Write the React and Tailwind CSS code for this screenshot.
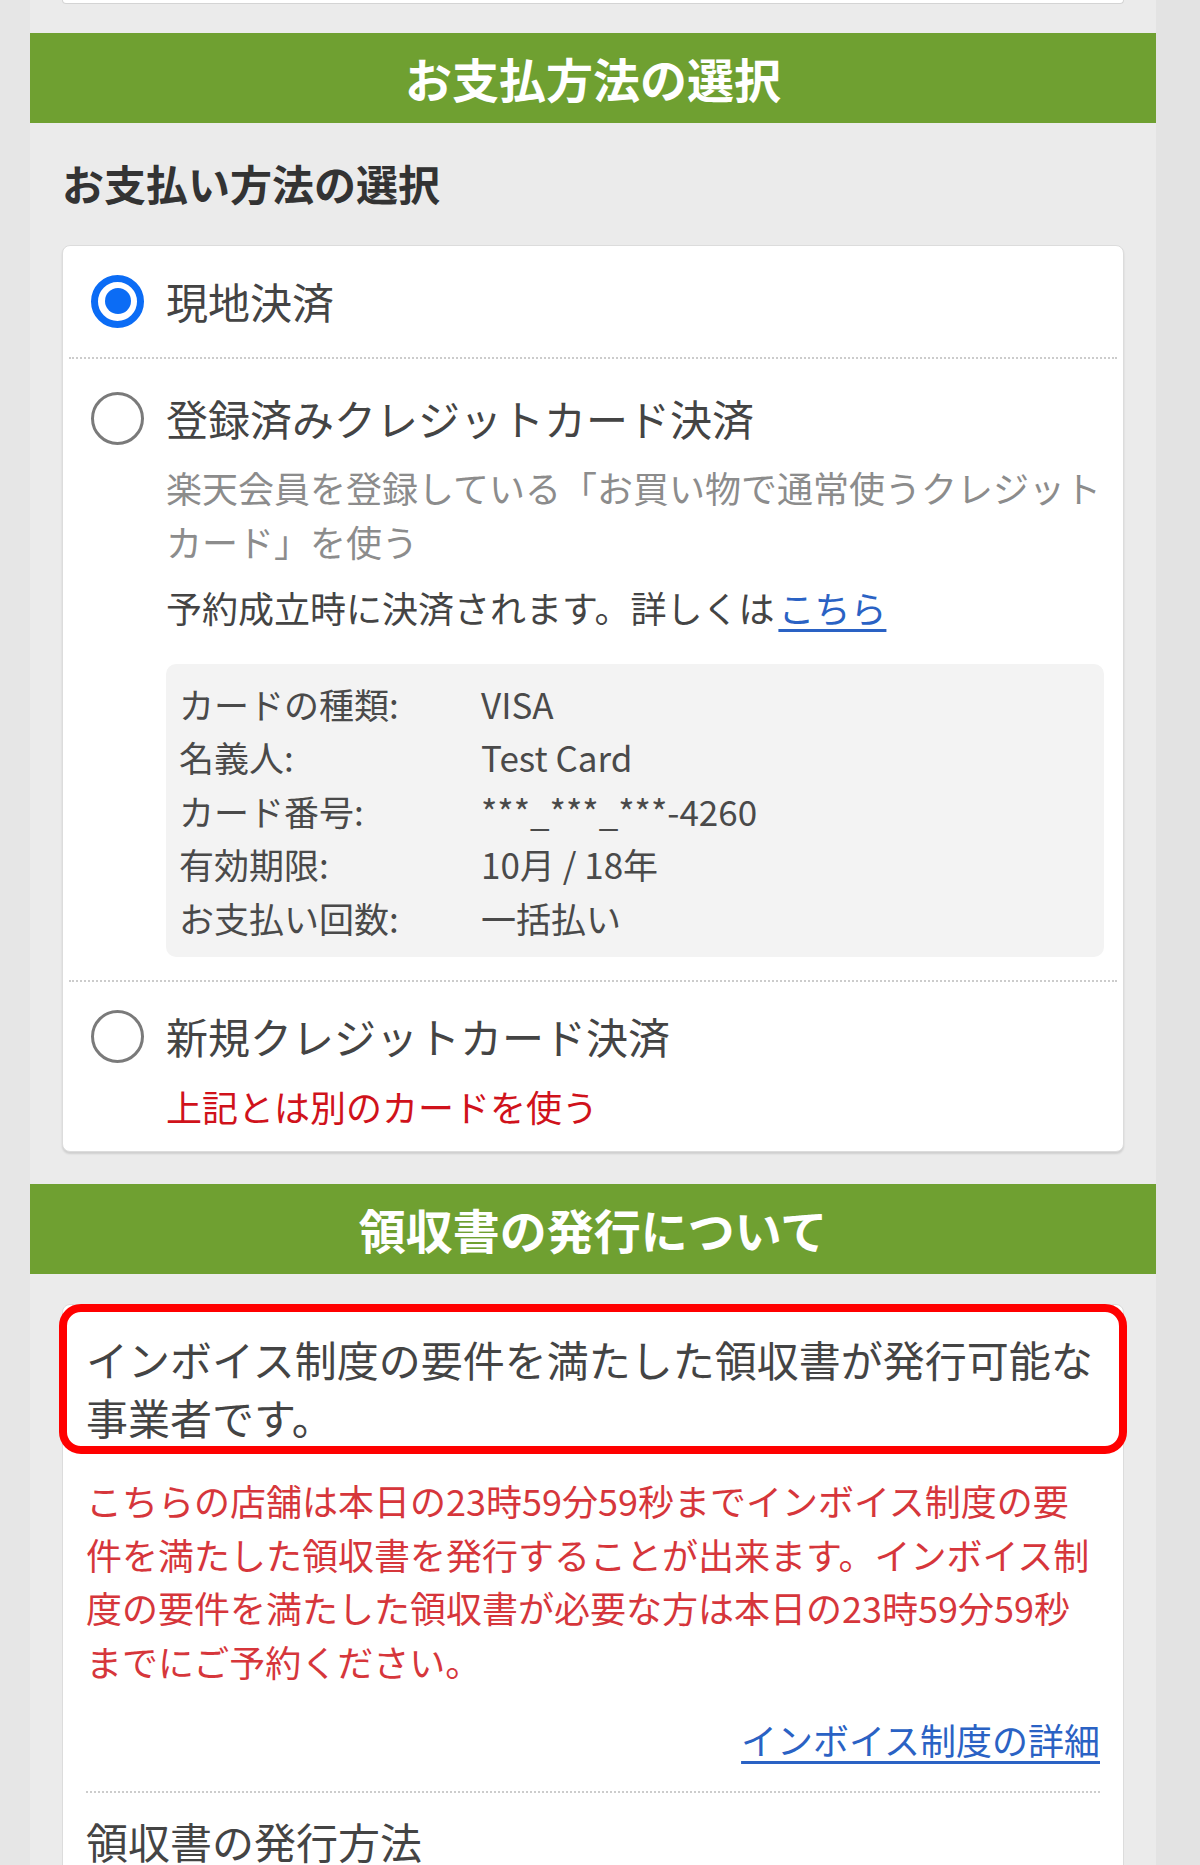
import React, { useState } from "react";

const cardRows = [
  { label: "カードの種類:", value: "VISA" },
  { label: "名義人:", value: "Test Card" },
  { label: "カード番号:", value: "***_***_***-4260" },
  { label: "有効期限:", value: "10月 / 18年" },
  { label: "お支払い回数:", value: "一括払い" },
];

function Radio({ checked }) {
  if (checked) {
    return (
      <span className="w-[53px] h-[53px] shrink-0 rounded-full border-[7px] border-[#0b6cf5] flex items-center justify-center">
        <span className="w-[26px] h-[26px] rounded-full bg-[#0b6cf5]" />
      </span>
    );
  }
  return (
    <span className="w-[53px] h-[53px] shrink-0 rounded-full border-[3px] border-[#7a7a7a] bg-white" />
  );
}

function SectionHeader({ children, className = "" }) {
  return (
    <div
      className={`h-[90px] bg-[#6fa031] flex items-center justify-center text-white font-bold text-[47px] ${className}`}
    >
      {children}
    </div>
  );
}

export default function App() {
  const [method, setMethod] = useState("local");

  return (
    <div className="h-[1865px] overflow-hidden flex bg-[#e4e4e4] font-['Noto_Sans_CJK_JP','Noto_Sans',sans-serif] text-[#444]">
      <div className="w-[30px] bg-[#e6e6e6]" />
      <div className="w-[1126px] bg-[#ebebeb]">
        {/* previous card edge */}
        <div className="h-[4px] mx-[32px] bg-white border border-t-0 border-[#d4d4d4] rounded-b-[6px]" />

        <SectionHeader className="mt-[29px]">お支払方法の選択</SectionHeader>

        <h2 className="pt-[35px] px-[32px] text-[42px] leading-[50px] font-bold text-[#333]">
          お支払い方法の選択
        </h2>

        <div className="mt-[37px] mx-[32px] bg-white border border-[#dcdcdc] rounded-[8px] shadow-[0_2px_2px_rgba(0,0,0,0.12)]">
          {/* 現地決済 */}
          <div
            className="pt-[27px] pb-[28px] pl-[28px] flex items-center gap-[22px] cursor-pointer"
            onClick={() => setMethod("local")}
          >
            <Radio checked={method === "local"} />
            <span className="text-[42px] leading-[56px]">現地決済</span>
          </div>

          <div className="mx-[6px] border-t-2 border-dotted border-[#cccccc]" />

          {/* 登録済みクレジットカード決済 */}
          <div
            className="pt-[31px] pb-[23px] pl-[28px] pr-[12px] cursor-pointer"
            onClick={() => setMethod("saved")}
          >
            <div className="flex items-center gap-[22px]">
              <Radio checked={method === "saved"} />
              <span className="text-[42px] leading-[56px]">登録済みクレジットカード決済</span>
            </div>
            <div className="pl-[75px]">
              <p className="mt-[15px] text-[36px] leading-[53.5px] text-[#8c8c8c]">
                楽天会員を登録している「お買い物で通常使うクレジットカード」を使う
              </p>
              <p className="mt-[13px] text-[36px] leading-[53.5px] text-[#444]">
                予約成立時に決済されます。詳しくは
                <a href="#" className="ml-[4px] text-[#2a62c4] underline underline-offset-[6px]">
                  こちら
                </a>
              </p>
              <div className="mt-[29px] mr-[7px] bg-[#f3f3f3] rounded-[10px] pt-[13px] pb-[13px] pl-[13px]">
                {cardRows.map((row) => (
                  <div
                    key={row.label}
                    className="grid grid-cols-[302px_1fr] text-[35px] leading-[53.5px] text-[#4a4a4a]"
                  >
                    <span>{row.label}</span>
                    <span>{row.value}</span>
                  </div>
                ))}
              </div>
            </div>
          </div>

          <div className="mx-[6px] border-t-2 border-dotted border-[#cccccc]" />

          {/* 新規クレジットカード決済 */}
          <div
            className="pt-[26px] pb-[18px] pl-[28px] cursor-pointer"
            onClick={() => setMethod("new")}
          >
            <div className="flex items-center gap-[22px]">
              <Radio checked={method === "new"} />
              <span className="text-[42px] leading-[56px]">新規クレジットカード決済</span>
            </div>
            <p className="mt-[15px] pl-[75px] text-[36px] leading-[54px] text-[#d0121b]">
              上記とは別のカードを使う
            </p>
          </div>
        </div>

        <SectionHeader className="mt-[32px]">領収書の発行について</SectionHeader>

        <div className="mt-[30px] mx-[32px] h-[700px] bg-white border border-[#dcdcdc] rounded-[8px]">
          <div className="-mx-[4px] -mt-[1px] border-[8px] border-[#ff0000] rounded-[22px] bg-white pt-[18px] pl-[19px] pr-[19px] text-[42px] leading-[58px] text-[#444]">
            インボイス制度の要件を満たした領収書が発行可能な事業者です。
          </div>

          <div className="px-[23px]">
            <p className="mt-[20px] text-[36px] leading-[53.6px] text-[#d6363b]">
              こちらの店舗は本日の23時59分59秒までインボイス制度の要件を満たした領収書を発行することが出来ます。インボイス制度の要件を満たした領収書が必要な方は本日の23時59分59秒までにご予約ください。
            </p>
            <div className="mt-[25px] text-right text-[36px] leading-[53.6px]">
              <a href="#" className="text-[#2a62c4] underline underline-offset-[6px]">
                インボイス制度の詳細
              </a>
            </div>
            <div className="mt-[24px] border-t-2 border-dotted border-[#cccccc]" />
            <h3 className="mt-[20px] text-[42px] leading-[56px] text-[#444]">領収書の発行方法</h3>
          </div>
        </div>
      </div>
      <div className="flex-1 bg-[#e3e3e3]" />
    </div>
  );
}
